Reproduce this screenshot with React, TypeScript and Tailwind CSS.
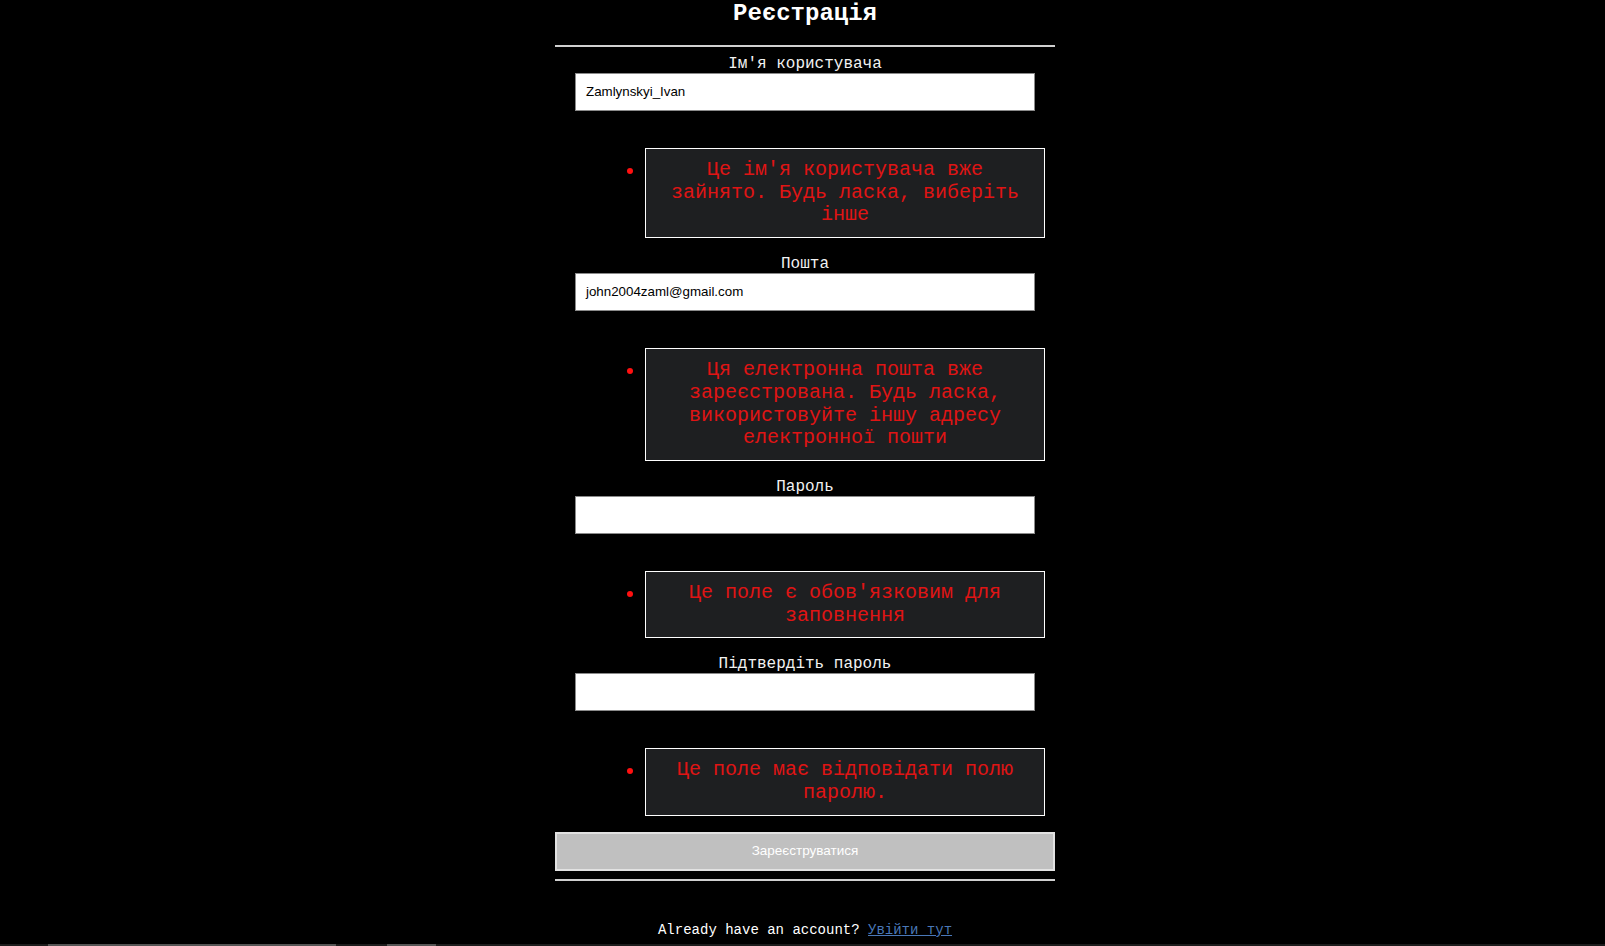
import React from "react";

const mono = { fontFamily: '"Liberation Mono", "Courier New", monospace' };

function ErrorItem({ children }: { children: React.ReactNode }) {
  return (
    <div className="flex items-start mt-[37px] mb-[17px]">
      <span className="ml-[72px] mt-[20px] w-[6px] h-[6px] rounded-full bg-[#ff1010] shrink-0" />
      <div
        className="ml-[12px] w-[400px] border border-white bg-[#1e1f21] px-[10px] py-[10px] text-center text-[20px] leading-[22.66px] text-[#e01414]"
        style={mono}
      >
        {children}
      </div>
    </div>
  );
}

function Field({ label, value }: { label: string; value: string }) {
  return (
    <div className="flex flex-col">
      <label className="text-center text-[16px] leading-[18.13px] text-[#f2f2f2]" style={mono}>
        {label}
      </label>
      <div className="mx-[20px] h-[38px] bg-white border border-[#8a8a8a] flex items-center px-[10px]">
        <span
          className="text-[13.33px] text-black"
          style={{ fontFamily: '"Liberation Sans", Arial, sans-serif' }}
        >
          {value}
        </span>
      </div>
    </div>
  );
}

export default function App() {
  return (
    <div className="w-full h-[946px] bg-black overflow-hidden flex flex-col">
      <div className="flex justify-center pl-[5px]">
        <div className="w-[500px] flex flex-col">
          <h1 className="text-center text-[24px] leading-[27px] font-bold text-white" style={mono}>
            Реєстрація
          </h1>
          <div className="mt-[18px] h-[2px] bg-[#d0d0d0]" />
          <div className="mt-[8px]" />
          <Field label="Ім'я користувача" value="Zamlynskyi_Ivan" />
          <ErrorItem>Це ім'я користувача вже зайнято. Будь ласка, виберіть інше</ErrorItem>
          <Field label="Пошта" value="john2004zaml@gmail.com" />
          <ErrorItem>
            Ця електронна пошта вже зареєстрована. Будь ласка, використовуйте іншу адресу електронної пошти
          </ErrorItem>
          <Field label="Пароль" value="" />
          <ErrorItem>Це поле є обов'язковим для заповнення</ErrorItem>
          <Field label="Підтвердіть пароль" value="" />
          <ErrorItem>Це поле має відповідати полю паролю.</ErrorItem>
          <button
            className="h-[39px] w-full bg-[#c0c0c0] border-2 border-[#e2e2e2] text-white text-[13.5px] -mt-[1px]"
            style={{ fontFamily: '"Liberation Sans", Arial, sans-serif' }}
          >
            Зареєструватися
          </button>
          <div className="mt-[8px] h-[2px] bg-[#d0d0d0]" />
          <p className="mt-[41px] text-center text-[14px] leading-[16px] text-white" style={mono}>
            Already have an account?{" "}
            <a href="#" className="text-[#4a78b8] underline">
              Увійти тут
            </a>
          </p>
        </div>
      </div>
      <div className="mt-auto h-[2px] w-full bg-[#1c1c1c] flex">
        <div className="ml-[48px] w-[288px] bg-[#555555]" />
        <div className="ml-[51px] w-[49px] bg-[#555555]" />
      </div>
    </div>
  );
}
